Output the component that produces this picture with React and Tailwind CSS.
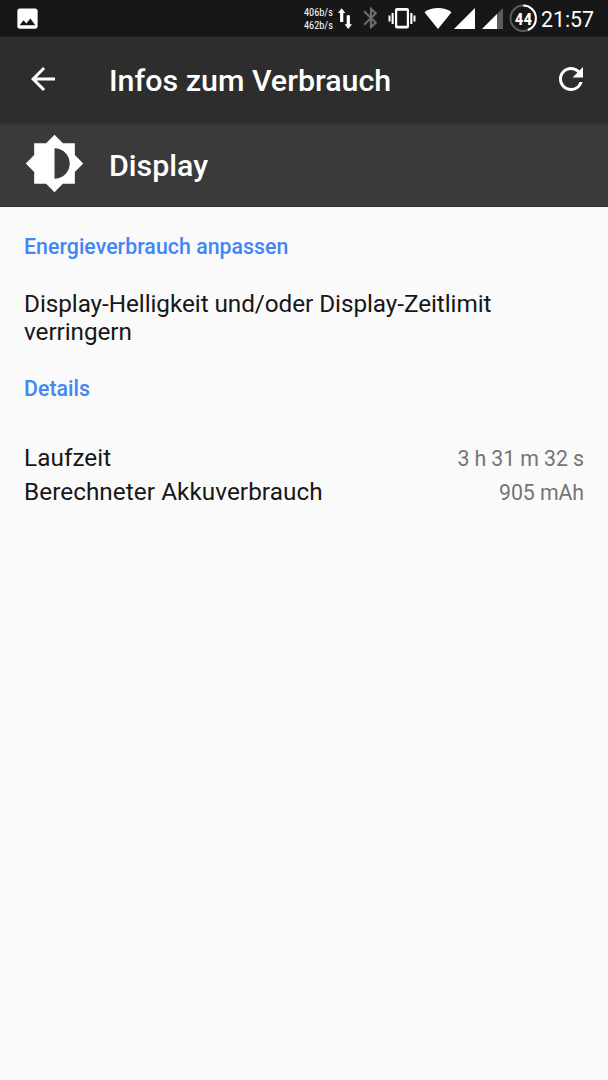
import { MdArrowBack, MdBluetooth, MdBrightnessMedium, MdImage, MdRefresh } from "react-icons/md";

const DETAILS = [
  { label: "Laufzeit", value: "3 h 31 m 32 s" },
  { label: "Berechneter Akkuverbrauch", value: "905 mAh" },
];

function StatusBar() {
  return (
    <div className="flex h-9 items-start bg-[#171717] text-white">
      <MdImage className="mt-[5px] ml-[14px] size-[27px]" />

      {/* Network speed */}
      <div className="mt-[6px] ml-auto w-[34px] font-['Roboto_Condensed','Roboto',sans-serif] text-[10.5px] leading-[13px] whitespace-nowrap">
        <div className="origin-left scale-x-[0.98]">406b/s</div>
        <div className="origin-left scale-x-[0.98]">462b/s</div>
      </div>
      <svg className="mt-2 h-[22px] w-[14px]" viewBox="0 0 14 22" fill="currentColor">
        <path d="M3.700 0.300 7.300 5H5.300V14H2.100V5H0Z" />
        <path d="M8.700 7.300H11.900V16.300H14L10.300 21 6.600 16.300H8.700Z" />
      </svg>

      <MdBluetooth className="mt-[5px] ml-[6px] size-[26px] text-[#6b6b6b]" />

      {/* Vibrate */}
      <svg className="mt-2 ml-[4px] h-[21px] w-[28px]" viewBox="0 0 28 21" fill="currentColor">
        <path fillRule="evenodd" d="M9 0H19A2 2 0 0 1 21 2V18.500A2 2 0 0 1 19 20.500H9A2 2 0 0 1 7 18.500V2A2 2 0 0 1 9 0ZM9.200 2.700V17.800H18.800V2.700Z" />
        <path d="M0.500 7.500H2.500V13.500H0.500ZM3.600 5H5.700V16H3.600ZM22.300 5H24.400V16H22.300ZM25.500 7.500H27.500V13.500H25.500Z" />
      </svg>

      {/* Wifi */}
      <svg className="mt-2 ml-[8px] h-[21px] w-[28px]" viewBox="0 0 28 21" fill="currentColor">
        <path d="M14 21 0.500 4.200C4.400 1.300 9 0 14 0S23.600 1.300 27.500 4.200Z" />
      </svg>

      {/* Signal strength, both SIMs */}
      <svg className="mt-2 ml-[2px] h-[21px] w-[21px]" viewBox="0 0 21 21" fill="currentColor">
        <path d="M0 21 21 0V21Z" />
      </svg>
      <svg className="mt-2 ml-[7px] h-[21px] w-[21px]" viewBox="0 0 21 21" fill="currentColor">
        <path d="M0 21 21 0V21Z" fill="#5b5b5b" />
        <path d="M0 21 15 6V21Z" />
      </svg>

      {/* Battery */}
      <svg className="mt-1 ml-[6px] h-[28px] w-[28px]" viewBox="0 0 28 28">
        <circle cx="14.200" cy="14.200" r="12.700" fill="none" stroke="#5b5b5b" strokeWidth="2" />
        <circle
          cx="14.200"
          cy="14.200"
          r="12.700"
          fill="none"
          stroke="white"
          strokeWidth="2"
          pathLength="100"
          strokeDasharray="44 100"
          transform="rotate(-90 14.200 14.200)"
        />
        <text x="14.400" y="20.500" textAnchor="middle" fill="white" className="font-['Roboto_Condensed','Roboto',sans-serif] text-[17px] font-bold">
          44
        </text>
      </svg>

      <span className="mt-[8px] mr-[14px] ml-[4px] text-[21.3px] leading-6">21:57</span>
    </div>
  );
}

function SectionTitle({ children }) {
  return <h2 className="text-[21.3px] leading-[25px] font-medium tracking-[0.04px] text-[#4285f4]">{children}</h2>;
}

export default function App() {
  return (
    <div className="flex h-[1080px] w-[608px] flex-col overflow-hidden bg-[#fafafa] font-['Roboto',sans-serif] text-[#171717]">
      <StatusBar />

      {/* Toolbar */}
      <header className="z-10 flex h-[86px] items-center border-t border-[#232323] bg-[#2d2d2d] pr-[19px] pl-[24.5px] text-white shadow-[0_1px_4px_rgba(0,0,0,0.3)]">
        <MdArrowBack className="mb-[2px] size-[36px]" />
        <h1 className="mt-[3px] ml-[48.5px] flex-1 text-[30.4px] leading-9 font-medium">Infos zum Verbrauch</h1>
        <MdRefresh className="mb-[2px] size-[36px]" />
      </header>

      {/* App entry */}
      <div className="flex h-[85px] items-center border-b border-[#2e2e2e] bg-[#3a3a3a] pl-[24px] text-white">
        <MdBrightnessMedium className="mb-[2px] size-[61px]" />
        <span className="mt-[3px] ml-[24px] text-[30.4px] leading-9 font-medium">Display</span>
      </div>

      <main className="px-6 pt-[27px]">
        <SectionTitle>Energieverbrauch anpassen</SectionTitle>
        <p className="mt-[31px] mb-[30px] text-[24.3px] leading-[28px] tracking-[-0.06px]">
          Display-Helligkeit und/oder Display-Zeitlimit verringern
        </p>
        <SectionTitle>Details</SectionTitle>
        <dl className="mt-[40px]">
          {DETAILS.map((item) => (
            <div key={item.label} className="flex h-[34px] items-baseline justify-between leading-[34px]">
              <dt className="text-[24.3px] tracking-[0.06px]">{item.label}</dt>
              <dd className="text-[21.3px] tracking-[-0.08px] text-[#757575]">{item.value}</dd>
            </div>
          ))}
        </dl>
      </main>
    </div>
  );
}
